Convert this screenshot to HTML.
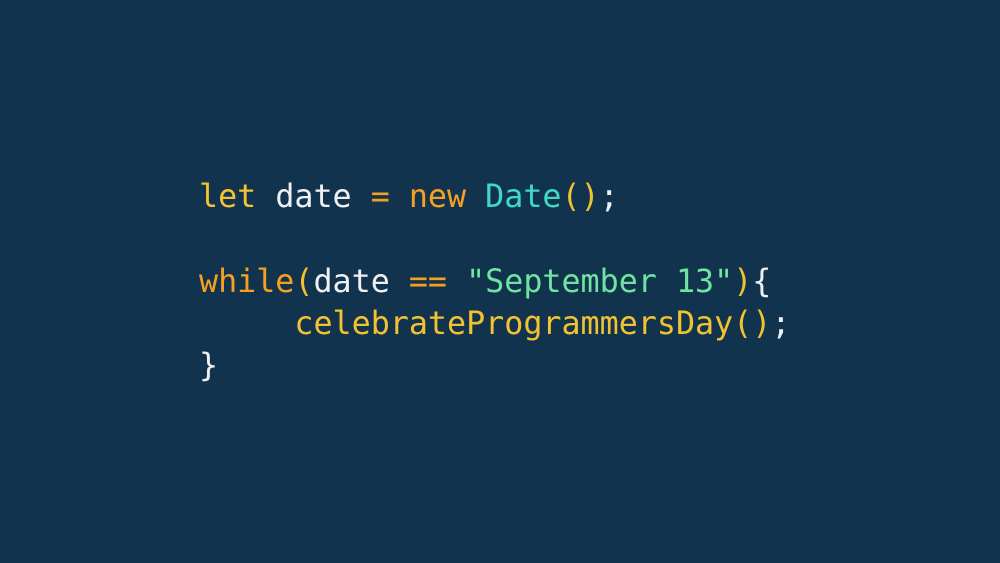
<!DOCTYPE html>
<html><head><style>
html,body{margin:0;padding:0;}
body{width:1000px;height:563px;background:#12334e;overflow:hidden;position:relative;}
pre{position:absolute;left:199px;top:176px;margin:0;font-family:"DejaVu Sans Mono",monospace;font-size:31.7px;line-height:42.3px;color:#e8e8e8;}
.y{color:#f2c230}.o{color:#f5a01f}.t{color:#3fd9c6}.g{color:#6fe3a0}.w{color:#eef0f2}
</style></head><body>
<pre><span class="y">let</span> <span class="w">date</span> <span class="o">=</span> <span class="o">new</span> <span class="t">Date</span><span class="y">()</span><span class="w">;</span>

<span class="o">while</span><span class="y">(</span><span class="w">date</span> <span class="o">==</span> <span class="g">"September 13"</span><span class="y">)</span><span class="w">{</span>
     <span class="y">celebrateProgrammersDay()</span><span class="w">;</span>
<span class="w">}</span></pre>
</body></html>
